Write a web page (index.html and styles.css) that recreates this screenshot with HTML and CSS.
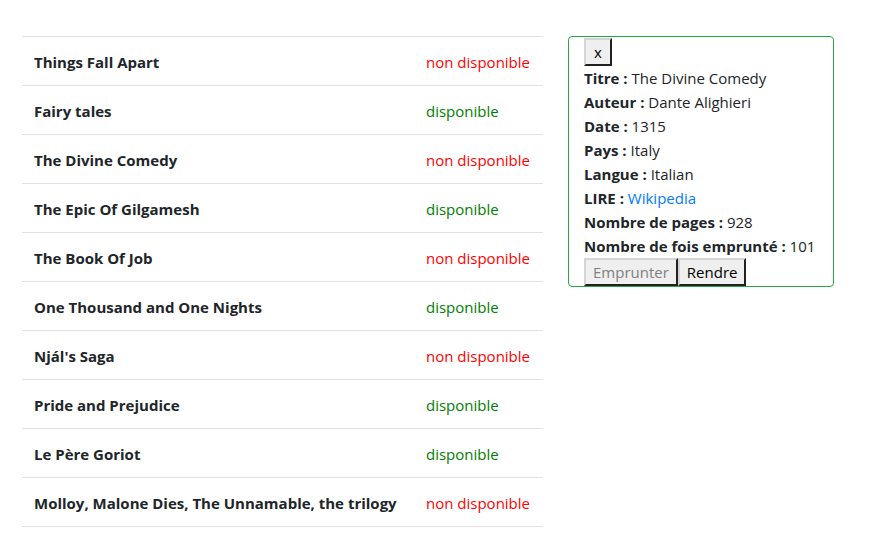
FILE: index.html
```html
<!DOCTYPE html>
<html lang="fr">
<head>
<meta charset="utf-8">
<title>Bibliothèque</title>
<link rel="stylesheet" href="styles.css">
</head>
<body>
<div class="page">
  <table class="books">
    <tbody>
      <tr><td class="title">Things Fall Apart</td><td class="status no">non disponible</td></tr>
      <tr><td class="title">Fairy tales</td><td class="status yes">disponible</td></tr>
      <tr><td class="title">The Divine Comedy</td><td class="status no">non disponible</td></tr>
      <tr><td class="title">The Epic Of Gilgamesh</td><td class="status yes">disponible</td></tr>
      <tr><td class="title">The Book Of Job</td><td class="status no">non disponible</td></tr>
      <tr><td class="title">One Thousand and One Nights</td><td class="status yes">disponible</td></tr>
      <tr><td class="title">Njál's Saga</td><td class="status no">non disponible</td></tr>
      <tr><td class="title">Pride and Prejudice</td><td class="status yes">disponible</td></tr>
      <tr><td class="title">Le Père Goriot</td><td class="status yes">disponible</td></tr>
      <tr><td class="title">Molloy, Malone Dies, The Unnamable, the trilogy</td><td class="status no">non disponible</td></tr>
    </tbody>
  </table>
  <div class="details">
    <button class="btn btn-close" type="button">x</button>
    <div class="line"><b>Titre :</b> The Divine Comedy</div>
    <div class="line"><b>Auteur :</b> Dante Alighieri</div>
    <div class="line"><b>Date :</b> 1315</div>
    <div class="line"><b>Pays :</b> Italy</div>
    <div class="line"><b>Langue :</b> Italian</div>
    <div class="line"><b>LIRE :</b> <a href="#" class="link">Wikipedia</a></div>
    <div class="line"><b>Nombre de pages :</b> 928</div>
    <div class="line"><b>Nombre de fois emprunté :</b> 101</div>
    <div class="actions">
      <button class="btn" type="button" disabled>Emprunter</button><button class="btn" type="button">Rendre</button>
    </div>
  </div>
</div>
</body>
</html>
```
FILE: styles.css
```css
html, body {
  margin: 0;
  padding: 0;
  background: #fff;
}
body {
  font-family: "Open Sans", "Noto Sans", sans-serif;
  font-size: 15px;
  line-height: 24px;
  color: #212529;
}
.page {
  display: flex;
  align-items: flex-start;
  gap: 25px;
  padding: 36px 22px 0;
}
.books {
  border-collapse: collapse;
  width: 521px;
  table-layout: fixed;
  border-bottom: 1px solid #dee2e6;
}
.books td {
  border-top: 1px solid #dee2e6;
  padding: 13px 12px 11px;
  vertical-align: top;
  white-space: nowrap;
}
.books td.title {
  width: 368px;
  font-weight: 700;
}
.books td.status {
  width: 105px;
}
.no { color: #ff0000; }
.yes { color: #008000; }
.details {
  width: 234px;
  border: 1px solid #28a745;
  border-radius: 4px;
  padding: 1px 15px 0 15px;
}
.line { white-space: nowrap; }
.line b { font-weight: 700; }
.link { color: #007bff; text-decoration: none; }
.btn {
  font-family: inherit;
  font-size: 15px;
  line-height: 20px;
  color: #000;
  background: #efefef;
  border: 2px outset #d4d4d4;
  border-right-color: #767676;
  border-bottom-color: #767676;
  border-radius: 0;
  padding: 2px 7px 2px;
  margin: 0;
  display: inline-block;
}
.btn-close { padding: 2px 8px; }
.btn:disabled { color: #808080; }
.actions { display: flex; }
```
